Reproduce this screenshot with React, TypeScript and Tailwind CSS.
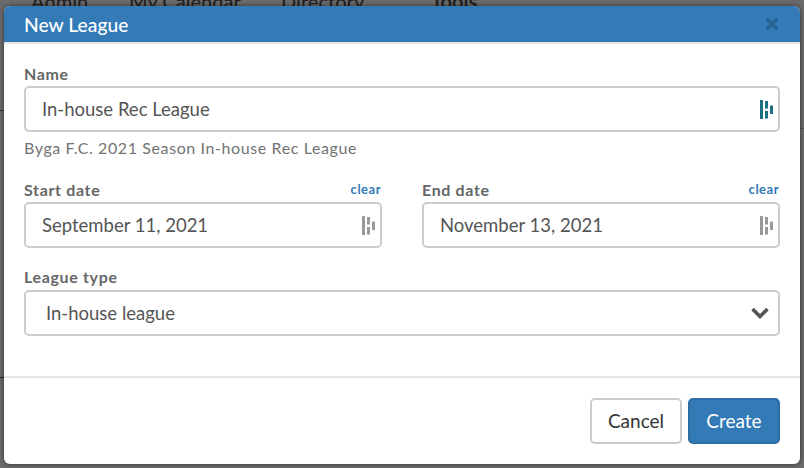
function SlashIcon({ color }: { color: string }) {
  return (
    <svg width="14" height="19" viewBox="0 0 14 19" className="shrink-0">
      <rect x="0" y="0" width="3" height="19" rx="0.5" fill={color} />
      <rect x="5" y="1" width="3" height="7.5" fill={color} />
      <rect x="5" y="11" width="3" height="7.5" fill={color} />
      <rect x="10" y="5.5" width="3" height="8.5" rx="0.5" fill={color} />
    </svg>
  );
}

function DateField({ label, value }: { label: string; value: string }) {
  return (
    <div className="flex-1 min-w-0">
      <div className="flex items-end justify-between h-[19px]">
        <span className="text-[16px] font-bold text-[#666666] tracking-[0.65px] leading-[19px]">{label}</span>
        <span className="text-[13px] font-bold text-[#337ab7] tracking-[0.5px] leading-[16px] pb-[2px] pr-[1px]">clear</span>
      </div>
      <div className="mt-[3px] h-[46px] border-2 border-[#cccccc] rounded-[5px] flex items-center justify-between pl-[16px] pr-[4px] text-[18.5px] text-[#555555]">
        <span className="pt-[2px]">{value}</span>
        <SlashIcon color="#999999" />
      </div>
    </div>
  );
}

export default function App() {
  return (
    <div className="relative w-[804px] h-[468px] overflow-hidden bg-[#6b6b6b] font-['Lato','Open_Sans',sans-serif]">
      <div className="absolute left-[31px] top-[-14px] flex text-[20px] text-[#222222] font-medium">
        <span className="w-[98px]">Admin</span>
        <span className="w-[152px]">My Calendar</span>
        <span className="w-[150px]">Directory</span>
        <span className="font-bold">Tools</span>
      </div>
      <div className="absolute left-0 top-[110px] w-[4px] h-px bg-[#222a33]" />
      <div className="absolute left-0 top-[377px] w-[4px] h-px bg-[#222a33]" />
      <div className="absolute right-0 top-[128px] w-[4px] h-px bg-[#555555]" />
      <div className="absolute left-[4px] top-[6px] w-[796px] h-[458px] bg-white rounded-[6px] overflow-hidden flex flex-col shadow-[0_0_5px_rgba(0,0,0,0.55)]">
        <div className="h-[36px] shrink-0 bg-[#337ab7] border-b-2 border-[#e5e5e5] box-content flex items-center justify-between pl-[20px] pr-[21px]">
          <span className="text-[19.3px] font-medium text-white pt-[2px]">New League</span>
          <svg width="14" height="14" viewBox="0 0 14 14" className="text-[#24608f]">
            <path d="M1.5 1.5 L12.5 12.5 M12.5 1.5 L1.5 12.5" stroke="currentColor" strokeWidth="2.6" />
          </svg>
        </div>
        <div className="px-[20px] pt-[20px] flex-1 min-h-0 border-b-2 border-[#e5e5e5]">
          <div className="text-[16px] font-bold text-[#666666] tracking-[0.65px] leading-[19px]">Name</div>
          <div className="mt-[3px] h-[46px] border-2 border-[#cccccc] rounded-[5px] flex items-center justify-between pl-[16px] pr-[4px] text-[18.5px] text-[#555555]">
            <span className="pt-[2px]">In-house Rec League</span>
            <SlashIcon color="#1b6f80" />
          </div>
          <div className="mt-[6px] text-[16px] text-[#737373] tracking-[0.6px] leading-[20px]">
            Byga F.C. 2021 Season In-house Rec League
          </div>
          <div className="mt-[22px] flex gap-[40px]">
            <DateField label="Start date" value="September 11, 2021" />
            <DateField label="End date" value="November 13, 2021" />
          </div>
          <div className="mt-[19px] text-[16px] font-bold text-[#666666] tracking-[0.65px] leading-[19px]">League type</div>
          <div className="mt-[4px] h-[46px] border-2 border-[#cccccc] rounded-[5px] flex items-center justify-between pl-[20px] pr-[8px] text-[18.5px] text-[#555555]">
            <span className="pt-[2px]">In-house league</span>
            <svg width="20" height="14" viewBox="0 0 20 14">
              <path d="M2.5 3 L10 10.5 L17.5 3" fill="none" stroke="#555555" strokeWidth="3.6" />
            </svg>
          </div>
        </div>
        <div className="h-[86px] shrink-0 flex items-start justify-end gap-[6px] pt-[20px] pr-[20px]">
          <button className="w-[92px] h-[46px] border-2 border-[#cccccc] rounded-[5px] bg-white text-[19px] text-[#333333]">Cancel</button>
          <button className="w-[92px] h-[46px] border-2 border-[#2e6da4] rounded-[5px] bg-[#337ab7] text-[19px] text-white">Create</button>
        </div>
      </div>
    </div>
  );
}
